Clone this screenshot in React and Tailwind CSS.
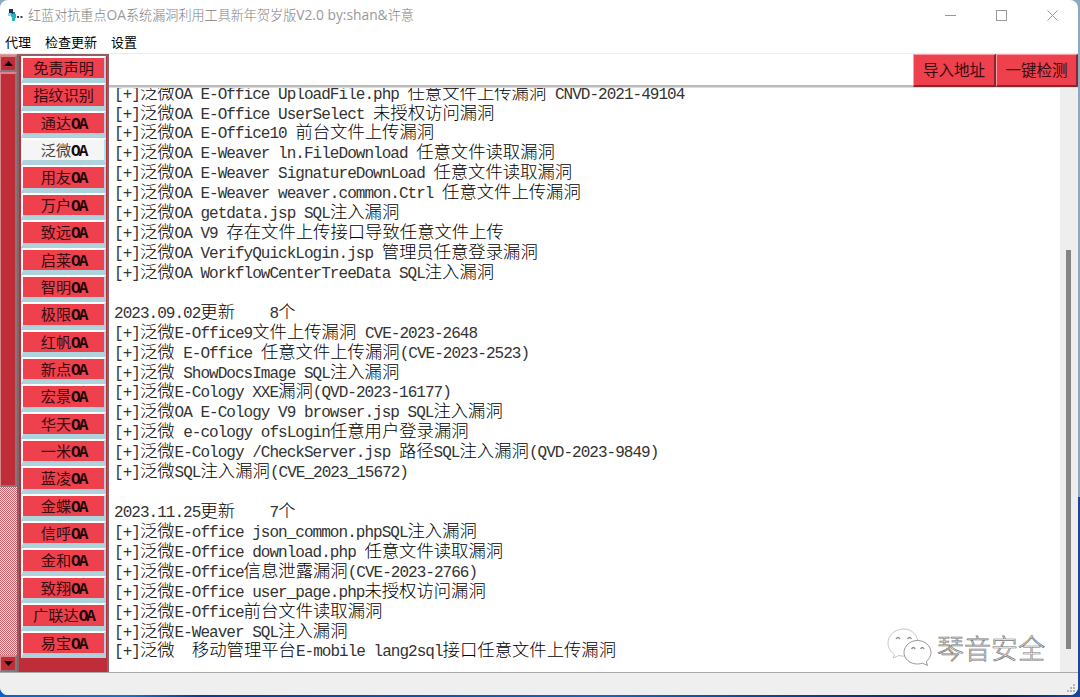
import React from 'react';

const vendors = [
  '免责声明', '指纹识别', '通达OA', '泛微OA', '用友OA', '万户OA', '致远OA', '启莱OA',
  '智明OA', '极限OA', '红帆OA', '新点OA', '宏景OA', '华天OA', '一米OA', '蓝凌OA',
  '金蝶OA', '信呼OA', '金和OA', '致翔OA', '广联达OA', '易宝OA',
];

const lines = [
  '[+]泛微OA E-Office UploadFile.php 任意文件上传漏洞 CNVD-2021-49104',
  '[+]泛微OA E-Office UserSelect 未授权访问漏洞',
  '[+]泛微OA E-Office10 前台文件上传漏洞',
  '[+]泛微OA E-Weaver ln.FileDownload 任意文件读取漏洞',
  '[+]泛微OA E-Weaver SignatureDownLoad 任意文件读取漏洞',
  '[+]泛微OA E-Weaver weaver.common.Ctrl 任意文件上传漏洞',
  '[+]泛微OA getdata.jsp SQL注入漏洞',
  '[+]泛微OA V9 存在文件上传接口导致任意文件上传',
  '[+]泛微OA VerifyQuickLogin.jsp 管理员任意登录漏洞',
  '[+]泛微OA WorkflowCenterTreeData SQL注入漏洞',
  '',
  '2023.09.02更新    8个',
  '[+]泛微E-Office9文件上传漏洞 CVE-2023-2648',
  '[+]泛微 E-Office 任意文件上传漏洞(CVE-2023-2523)',
  '[+]泛微 ShowDocsImage SQL注入漏洞',
  '[+]泛微E-Cology XXE漏洞(QVD-2023-16177)',
  '[+]泛微OA E-Cology V9 browser.jsp SQL注入漏洞',
  '[+]泛微 e-cology ofsLogin任意用户登录漏洞',
  '[+]泛微E-Cology /CheckServer.jsp 路径SQL注入漏洞(QVD-2023-9849)',
  '[+]泛微SQL注入漏洞(CVE_2023_15672)',
  '',
  '2023.11.25更新    7个',
  '[+]泛微E-office json_common.phpSQL注入漏洞',
  '[+]泛微E-Office download.php 任意文件读取漏洞',
  '[+]泛微E-Office信息泄露漏洞(CVE-2023-2766)',
  '[+]泛微E-Office user_page.php未授权访问漏洞',
  '[+]泛微E-Office前台文件读取漏洞',
  '[+]泛微E-Weaver SQL注入漏洞',
  '[+]泛微  移动管理平台E-mobile lang2sql接口任意文件上传漏洞',
];

// Latin runs get their own face and tracking so that two of them fill one CJK cell
const Mixed = ({ text, latin }) =>
  text.split(/([\x20-\x7e]+)/).filter(Boolean).map((run, i) =>
    /^[\x20-\x7e]/.test(run) ? <span key={i} className={latin}>{run}</span> : run
  );

const ArrowButton = ({ down }) => (
  <div className="h-[17px] shrink-0 border-t-2 border-l border-r-2 border-b-2 border-t-[#d9868d] border-l-[#d9868d] border-r-[#83777a] border-b-[#83777a] bg-[#be2d38] flex items-center justify-center">
    <svg width="9" height="5" viewBox="0 0 9 5">
      <path d={down ? 'M0 0H9L4.5 5Z' : 'M0 5H9L4.5 0Z'} fill="#000" />
    </svg>
  </div>
);

const SideScrollbar = () => (
  <div className="w-[17px] shrink-0 flex flex-col bg-[#dfa0a6] pt-px">
    <ArrowButton />
    <div className="h-[415px] shrink-0 border-t-2 border-l border-r-2 border-b-2 border-t-[#d9868d] border-l-[#d9868d] border-r-[#83777a] border-b-[#83777a] bg-[#be2d38]" />
    <div className="flex-1 bg-[conic-gradient(#d0606a_25%,#f3e0e2_0_50%,#d0606a_0_75%,#f3e0e2_0)] bg-[length:2px_2px]" />
    <ArrowButton down />
  </div>
);

const ToolButton = ({ children, className }) => (
  <button className={`${className} h-full border-t border-l border-r-2 border-b-2 border-t-[#f8a0a6] border-l-[#f8a0a6] border-r-[#8a2630] border-b-[#8a2630] bg-[#ef404d] text-[15.5px] font-normal text-[#3a0c10] whitespace-nowrap`}>
    {children}
  </button>
);

const WeChatMark = () => (
  <svg width="46" height="40" viewBox="0 0 46 40" fill="#fff" stroke="#8c8c8c" strokeWidth="0.9">
    <path d="M17 1C8 1 1 7 1 15c0 5 2.600 9 6.500 11.500L6 30l6-2.500c2 .6 4 .8 6 .6L31 13C29.500 6 24 1 17 1Z" stroke="#c0c0c0" />
    <path d="M30.500 12.500C23 12.500 17 18 17 24.500S23 36 30.500 36c1.800 0 3.500-.3 5-.8l5 2.300-1.200-4.200C42.200 31.200 44 28 44 24.500c0-6.500-6-12-13.500-12Z" />
    <path d="M9 11q2-3 4 0M20.500 11q2-3 4 0M24.500 21q1.800-3 3.600 0M33.500 21q1.800-3 3.600 0" fill="none" strokeWidth="1.300" />
  </svg>
);

const App = () => {
  const active = '泛微OA';

  return (
    <div className="h-[697px] w-[1080px] overflow-hidden bg-[linear-gradient(#8aa9c2_0_497px,#17489b_497px)] font-['Noto_Sans_CJK_SC',sans-serif]">
      <div className="h-full pr-[2px] pb-[2px] bg-[linear-gradient(90deg,#0a64c4,#1570cf_130px,#0b3b91_200px,#1565c0_600px,#071d4e_1000px,#17489b)] bg-[length:1078px_8px] bg-bottom-left bg-no-repeat">
        <div className="h-full flex flex-col rounded-lg overflow-hidden bg-white">
          {/* Title bar */}
          <header className="h-[30px] shrink-0 flex items-center pl-2">
            <svg width="15" height="14" viewBox="0 0 15 14" className="mr-[5px]">
              <path d="M1 1h4v5H3.500V5H1Z" fill="#14375f" />
              <path d="M0 5h3v3H0Z" fill="#8ed5d9" />
              <path d="M3 6h5v4H7v3H4V9H3Z" fill="#22b9bd" />
              <path d="M5 4h2v2H5Z" fill="#46758d" />
              <path d="M9 8h2v2H9zM12.500 8h2v2h-2z" fill="#31445c" />
            </svg>
            <h1 className="text-[13.1px] leading-[30px] font-light text-[#808080] whitespace-pre">
              <Mixed text="红蓝对抗重点OA系统漏洞利用工具新年贺岁版V2.0 by:shan&许意" latin="font-['Open_Sans'] font-normal text-[13.8px] text-[#999]" />
            </h1>
            <div className="ml-auto flex items-center gap-10 pr-5 text-[#999]">
              <svg width="11" height="11" viewBox="0 0 11 11"><path d="M0 5.500H11" stroke="currentColor" /></svg>
              <svg width="11" height="11" viewBox="0 0 11 11"><rect x=".5" y=".5" width="10" height="10" fill="none" stroke="currentColor" /></svg>
              <svg width="11" height="11" viewBox="0 0 11 11"><path d="M.5.5l10 10M10.500.5l-10 10" stroke="currentColor" /></svg>
            </div>
          </header>

          {/* Menu */}
          <nav className="h-[23px] shrink-0 flex items-center gap-[14px] pl-[5px] pt-px text-[13px] text-black">
            <span>代理</span>
            <span>检查更新</span>
            <span>设置</span>
          </nav>

          <div className="flex-1 min-h-0 flex border-t border-[#ececec]">
            <SideScrollbar />

            {/* Vendor list */}
            <aside className="w-[92px] shrink-0 border-l-2 border-r-2 border-t-2 border-l-[#8a6268] border-r-[#8a6268] border-t-[#8a6268] bg-[#be2d38] pl-[2px] pr-px">
              {vendors.map((name) => (
                <button
                  key={name}
                  className={`block w-full h-[27.36px] border-t-2 border-l-2 border-r-2 border-b-[5px] border-t-white border-l-white border-b-[#afd3dd] pb-[3px] text-[15.2px] leading-[18px] font-normal whitespace-nowrap ${name === active ? 'bg-[#f5f5f5] border-r-[#99eef7] text-[#444]' : 'bg-[#ef404d] border-r-[#afd3dd] text-[#3a0c10]'}`}
                >
                  <Mixed text={name} latin="font-['Liberation_Mono'] font-bold text-[16px] tracking-[-2px] text-[#1c0608]" />
                </button>
              ))}
            </aside>

            <main className="flex-1 min-w-0 flex flex-col">
              <div className="h-[33px] shrink-0 flex">
                <input className="flex-1 min-w-0 border-b-2 border-[#bcbcbc] bg-white px-2 outline-none" />
                <ToolButton className="w-[83px]">导入地址</ToolButton>
                <ToolButton className="w-[82px]">一键检测</ToolButton>
              </div>

              <div className="relative flex-1 min-h-0 flex border-t border-[#dedede]">
                <div className="flex-1 min-w-0 overflow-hidden pl-[5px]">
                  <div className="-mt-[6.4px] text-[17.35px] leading-[19.93px] font-light text-black">
                    {lines.map((line, i) => (
                      <p key={i} className="h-[19.93px] whitespace-pre">
                        <Mixed text={line} latin="font-['Liberation_Mono'] font-normal text-[16px] tracking-[-0.975px] text-[#333]" />
                      </p>
                    ))}
                  </div>
                </div>
                <div className="w-[18px] shrink-0 bg-[#eee] pl-[6px] pt-[162px]">
                  <div className="w-[5px] h-[399px] bg-[#858585]" />
                </div>

                {/* Watermark */}
                <div className="absolute left-[778px] top-[540px] flex items-center gap-[4px]">
                  <WeChatMark />
                  <span className="text-[27px] leading-10 font-light text-white [-webkit-text-stroke:0.7px_#777]">琴音安全</span>
                </div>
              </div>
            </main>
          </div>

          {/* Status bar */}
          <footer className="h-[23px] shrink-0 border-t border-[#aaa] bg-[#efefef] flex items-end justify-end p-[2px]">
            <svg width="9" height="9" viewBox="0 0 9 9" fill="#b5b5b5">
              <path d="M6 0h2v2H6zM3 3h2v2H3zM6 3h2v2H6zM0 6h2v2H0zM3 6h2v2H3zM6 6h2v2H6z" />
            </svg>
          </footer>
        </div>
      </div>
    </div>
  );
};

export default App;
